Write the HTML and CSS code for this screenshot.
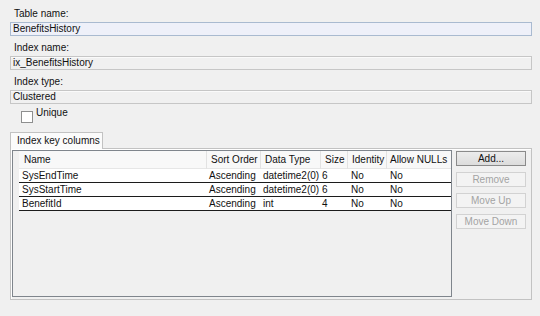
FILE: index.html
```html
<!DOCTYPE html>
<html>
<head>
<meta charset="utf-8">
<link rel="stylesheet" href="styles.css">
</head>
<body>
<div class="dialog">
  <div class="field">
    <div class="label">Table name:</div>
    <div class="box box-active">BenefitsHistory</div>
  </div>
  <div class="field">
    <div class="label">Index name:</div>
    <div class="box">ix_BenefitsHistory</div>
  </div>
  <div class="field">
    <div class="label">Index type:</div>
    <div class="box">Clustered</div>
  </div>
  <div class="check"><span class="checkbox"></span><span class="check-text">Unique</span></div>
  <div class="tabs"><div class="tab">Index key columns</div></div>
  <div class="panel">
    <div class="grid">
      <div class="row head">
        <div class="c">Name</div>
        <div class="c">Sort Order</div>
        <div class="c">Data Type</div>
        <div class="c">Size</div>
        <div class="c">Identity</div>
        <div class="c">Allow NULLs</div>
      </div>
      <div class="row data">
        <div class="c c1">SysEndTime</div>
        <div class="c c2">Ascending</div>
        <div class="c c3">datetime2(0)</div>
        <div class="c c4">6</div>
        <div class="c c5">No</div>
        <div class="c c6">No</div>
      </div>
      <div class="row data">
        <div class="c c1">SysStartTime</div>
        <div class="c c2">Ascending</div>
        <div class="c c3">datetime2(0)</div>
        <div class="c c4">6</div>
        <div class="c c5">No</div>
        <div class="c c6">No</div>
      </div>
      <div class="row data">
        <div class="c c1">BenefitId</div>
        <div class="c c2">Ascending</div>
        <div class="c c3">int</div>
        <div class="c c4">4</div>
        <div class="c c5">No</div>
        <div class="c c6">No</div>
      </div>
    </div>
    <div class="buttons">
      <div class="btn">Add...</div>
      <div class="btn disabled">Remove</div>
      <div class="btn disabled">Move Up</div>
      <div class="btn disabled">Move Down</div>
    </div>
  </div>
</div>
</body>
</html>
```
FILE: styles.css
```css
html, body {
  margin: 0;
  padding: 0;
  background: #f0f0f0;
}
body {
  font-family: "Liberation Sans", Arial, sans-serif;
  font-size: 10px;
  color: #111;
}
.dialog {
  width: 540px;
  height: 316px;
  box-sizing: border-box;
  padding: 7px 8px 0 10px;
}
.field {
  margin-bottom: 5px;
}
.label {
  line-height: 13px;
  padding-left: 4px;
  margin-bottom: 2px;
}
.box {
  height: 14px;
  box-sizing: border-box;
  border: 1px solid #c6c6c6;
  background: #f0f0f0;
  line-height: 12px;
  padding-left: 2px;
  box-shadow: inset 0 1px 0 #fafafa;
}
.box-active {
  background: #eef0f9;
  border-color: #a9bad0;
  box-shadow: none;
}
.check {
  display: flex;
  align-items: flex-start;
  padding-left: 11px;
  margin-top: -3px;
  height: 17px;
}
.checkbox {
  width: 12px;
  height: 12px;
  box-sizing: border-box;
  border: 1px solid #8e8f8f;
  background: #fff;
  margin-top: 5px;
  margin-right: 3px;
}
.check-text {
  line-height: 13px;
}
.tabs {
  display: flex;
  margin-top: 9px;
}
.tab {
  width: 93px;
  height: 17px;
  box-sizing: border-box;
  border: 1px solid #c2c2c2;
  border-bottom: none;
  background: #fbfbfb;
  padding-left: 6px;
  line-height: 15px;
  margin-bottom: -1px;
  position: relative;
  z-index: 1;
}
.panel {
  display: flex;
  align-items: flex-start;
  height: 152px;
  box-sizing: border-box;
  border: 1px solid #c2c2c2;
  padding: 1px 5px 2px 1px;
  background: #f0f0f0;
  box-shadow: inset 1px 1px 0 #fff;
  gap: 4px;
}
.grid {
  width: 440px;
  height: 147px;
  box-sizing: border-box;
  border: 1px solid #7f858c;
  padding-left: 6px;
  background: #f0f0f0;
}
.row {
  display: grid;
  grid-template-columns: 188px 54px 60px 27px 39px 64px;
}
.head {
  height: 18px;
  line-height: 18px;
  background: #f8f8f8;
  border-bottom: 1px solid #e6e6e6;
  box-sizing: border-box;
}
.head .c {
  padding-left: 4px;
  border-right: 1px solid #e2e2e2;
  white-space: nowrap;
}
.head .c:first-child {
  padding-left: 5px;
}
.head .c:last-child {
  padding-left: 3px;
  border-right: none;
}
.data {
  height: 14px;
  box-sizing: border-box;
  line-height: 13px;
  background: #fff;
  border-bottom: 1px solid #1c1c1c;
}
.data .c {
  white-space: nowrap;
}
.c1 { padding-left: 3px; }
.c2 { padding-left: 2px; }
.c3 { padding-left: 2px; }
.c4 { padding-left: 1px; }
.c5 { padding-left: 3px; }
.c6 { padding-left: 3px; }
.buttons {
  display: flex;
  flex-direction: column;
  gap: 6px;
  margin-top: 1px;
}
.btn {
  width: 70px;
  height: 15px;
  box-sizing: border-box;
  border: 1px solid #8a8a8a;
  background: linear-gradient(#ececec, #dcdcdc);
  text-align: center;
  line-height: 13px;
  color: #111;
}
.btn.disabled {
  border-color: #d2d2d2;
  background: #f3f3f3;
  color: #a3a3a3;
}
```
